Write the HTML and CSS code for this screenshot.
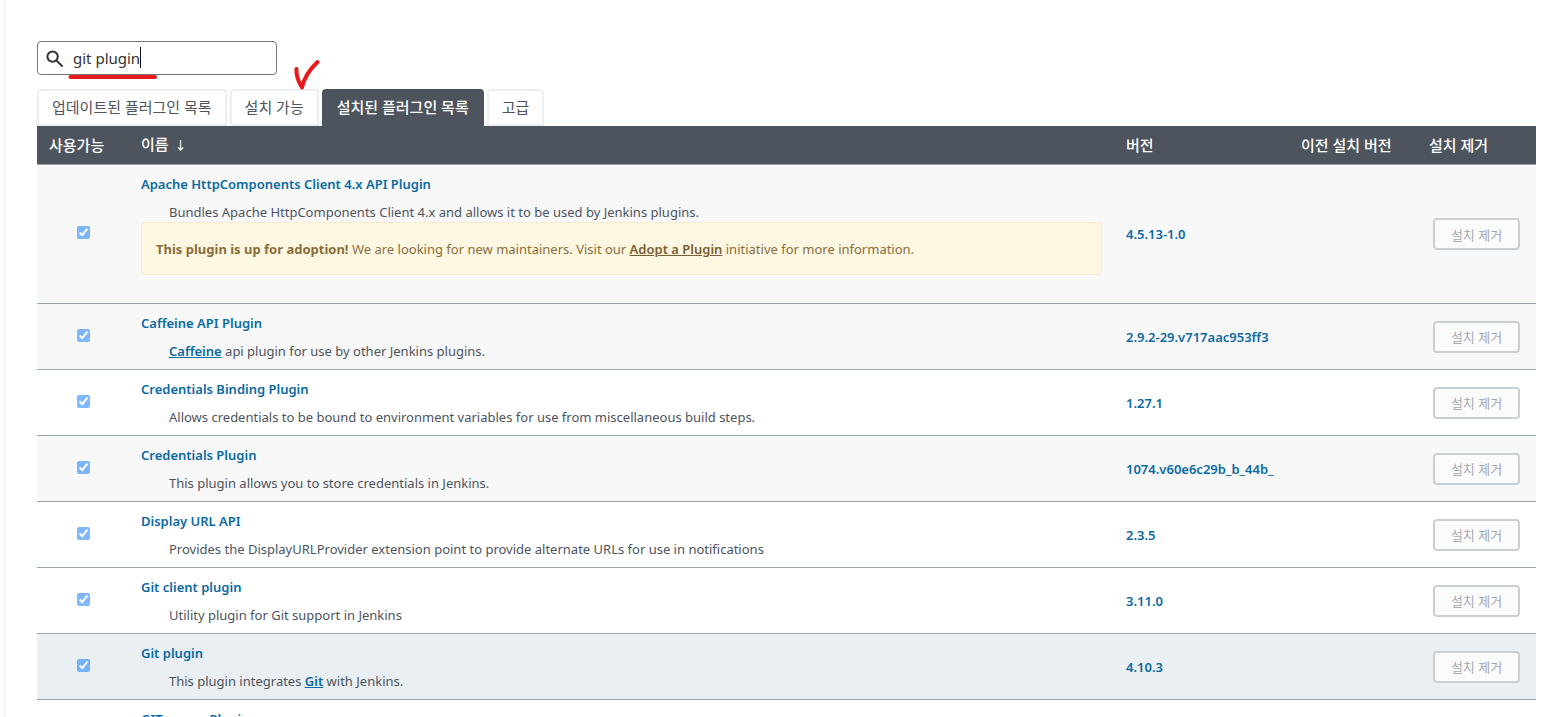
FILE: index.html
```html
<!DOCTYPE html>
<html lang="ko">
<head>
<meta charset="utf-8">
<title>플러그인 관리</title>
<link rel="stylesheet" href="styles.css">
</head>
<body>
<main class="panel">
  <div class="search">
    <svg class="search-icon" viewBox="0 0 18 18" aria-hidden="true"><circle cx="6.6" cy="6.6" r="5.2"/><path d="M10.6 10.6l6 6"/></svg>
    <input class="search-input" id="filter" type="text" value="git plugin" aria-label="플러그인 검색">
    <span class="caret"></span>
    <svg class="mark-line" viewBox="0 0 90 6" aria-hidden="true"><path d="M2.500 3H87"/></svg>
  </div>
  <nav class="tabs">
    <a class="tab" href="#updates">업데이트된 플러그인 목록</a>
    <a class="tab" href="#available">설치 가능<svg class="mark-check" viewBox="0 0 28 34" aria-hidden="true"><path d="M4.500 12C4 18 6 24 10 30.500C12 21 17 13 25.500 5"/></svg></a>
    <a class="tab tab-active" href="#installed">설치된 플러그인 목록</a>
    <a class="tab" href="#advanced">고급</a>
  </nav>
  <table class="plugins">
    <colgroup><col class="col-enabled"><col><col class="col-version"><col class="col-previous"><col class="col-uninstall"></colgroup>
    <thead>
      <tr><th>사용가능</th><th>이름 <span class="arrow">↓</span></th><th>버전</th><th>이전 설치 버전</th><th>설치 제거</th></tr>
    </thead>
    <tbody>
      <tr class="shaded">
        <td class="enabled"><input type="checkbox" checked aria-label="Apache HttpComponents Client 4.x API Plugin"></td>
        <td><a class="name" href="#p1">Apache HttpComponents Client 4.x API Plugin</a>
          <div class="excerpt">Bundles Apache HttpComponents Client 4.x and allows it to be used by Jenkins plugins.</div>
          <div class="alert"><strong>This plugin is up for adoption!</strong> We are looking for new maintainers. Visit our <a href="#adopt">Adopt a Plugin</a> initiative for more information.</div></td>
        <td><a class="version" href="#v1">4.5.13-1.0</a></td><td></td>
        <td class="uninstall"><button class="btn" disabled>설치 제거</button></td>
      </tr>
      <tr class="shaded">
        <td class="enabled"><input type="checkbox" checked aria-label="Caffeine API Plugin"></td>
        <td><a class="name" href="#p2">Caffeine API Plugin</a>
          <div class="excerpt"><a href="#caffeine">Caffeine</a> api plugin for use by other Jenkins plugins.</div></td>
        <td><a class="version" href="#v2">2.9.2-29.v717aac953ff3</a></td><td></td>
        <td class="uninstall"><button class="btn" disabled>설치 제거</button></td>
      </tr>
      <tr>
        <td class="enabled"><input type="checkbox" checked aria-label="Credentials Binding Plugin"></td>
        <td><a class="name" href="#p3">Credentials Binding Plugin</a>
          <div class="excerpt">Allows credentials to be bound to environment variables for use from miscellaneous build steps.</div></td>
        <td><a class="version" href="#v3">1.27.1</a></td><td></td>
        <td class="uninstall"><button class="btn" disabled>설치 제거</button></td>
      </tr>
      <tr class="shaded">
        <td class="enabled"><input type="checkbox" checked aria-label="Credentials Plugin"></td>
        <td><a class="name" href="#p4">Credentials Plugin</a>
          <div class="excerpt">This plugin allows you to store credentials in Jenkins.</div></td>
        <td><a class="version" href="#v4">1074.v60e6c29b_b_44b_</a></td><td></td>
        <td class="uninstall"><button class="btn" disabled>설치 제거</button></td>
      </tr>
      <tr>
        <td class="enabled"><input type="checkbox" checked aria-label="Display URL API"></td>
        <td><a class="name" href="#p5">Display URL API</a>
          <div class="excerpt">Provides the DisplayURLProvider extension point to provide alternate URLs for use in notifications</div></td>
        <td><a class="version" href="#v5">2.3.5</a></td><td></td>
        <td class="uninstall"><button class="btn" disabled>설치 제거</button></td>
      </tr>
      <tr>
        <td class="enabled"><input type="checkbox" checked aria-label="Git client plugin"></td>
        <td><a class="name" href="#p6">Git client plugin</a>
          <div class="excerpt">Utility plugin for Git support in Jenkins</div></td>
        <td><a class="version" href="#v6">3.11.0</a></td><td></td>
        <td class="uninstall"><button class="btn" disabled>설치 제거</button></td>
      </tr>
      <tr class="hovered">
        <td class="enabled"><input type="checkbox" checked aria-label="Git plugin"></td>
        <td><a class="name" href="#p7">Git plugin</a>
          <div class="excerpt">This plugin integrates <a href="#git">Git</a> with Jenkins.</div></td>
        <td><a class="version" href="#v7">4.10.3</a></td><td></td>
        <td class="uninstall"><button class="btn" disabled>설치 제거</button></td>
      </tr>
      <tr>
        <td></td><td><a class="name" href="#p8">GIT server Plugin</a></td><td></td><td></td><td></td>
      </tr>
    </tbody>
  </table>
</main>
</body>
</html>
```
FILE: styles.css
```css
* { box-sizing: border-box; }
body {
  margin: 0;
  height: 100vh;
  overflow: hidden;
  background: #fff;
  color: #4d545d;
  font-family: "Noto Sans", "Noto Sans CJK KR", sans-serif;
  font-size: 13px;
  line-height: 20px;
}
.panel {
  min-height: 100vh;
  margin-left: 4px;
  padding: 41px 32px 0;
  border-left: 1px solid #e9eff2;
}
.search { position: relative; width: 240px; height: 34px; margin-bottom: 14px; }
.search-input {
  width: 100%;
  height: 100%;
  padding: 0 8px 0 35px;
  border: 1px solid #73777c;
  border-radius: 4px;
  background: #fff;
  color: #333;
  font: 15px "Noto Sans", sans-serif;
}
.search-icon {
  position: absolute;
  left: 9px;
  top: 9px;
  width: 18px;
  height: 18px;
  fill: none;
  stroke: #333;
  stroke-width: 2;
}
.caret { position: absolute; left: 103px; top: 6px; width: 1px; height: 21px; background: #111; }
.mark-line, .mark-check { position: absolute; fill: none; stroke: #e8191c; stroke-width: 4; stroke-linecap: round; stroke-linejoin: round; }
.mark-line { left: 31px; top: 33px; width: 90px; height: 6px; }
.mark-check { right: -3px; top: -34px; width: 28px; height: 34px; }
.tabs { display: flex; gap: 3px; }
.tab {
  position: relative;
  height: 37px;
  padding: 6px 13px;
  border: 2px solid #e9eff2;
  border-radius: 4px 4px 0 0;
  color: #4d545d;
  font-size: 15px;
  font-weight: 400;
  text-decoration: none;
  white-space: nowrap;
}
.tab-active { background: #4d545d; border-color: #4d545d; color: #fff; font-weight: 500; }
.plugins { width: 100%; table-layout: fixed; border-collapse: separate; border-spacing: 0; }
.col-enabled { width: 92px; }
.col-version { width: 175px; }
.col-previous { width: 128px; }
.col-uninstall { width: 119px; }
th {
  height: 39px;
  padding: 0 12px;
  border-bottom: 1px solid #98a5af;
  background: #4d545d;
  color: #fff;
  font-size: 15px;
  font-weight: 500;
  text-align: left;
  white-space: nowrap;
}
.arrow { margin-left: 2px; font-size: 12px; font-weight: 500; }
td { padding: 8px 12px; border-bottom: 1px solid #98a5af; vertical-align: middle; }
.shaded { background: #f8f8f8; }
.hovered { background: #e9eff2; }
.enabled { text-align: center; }
.enabled input { display: block; width: 13px; height: 13px; margin: 0 auto 3px; opacity: .5; }
.name, .version { color: #0b6aa2; font-weight: 600; text-decoration: none; white-space: nowrap; }
.name { display: block; margin-top: 1px; }
.excerpt { margin: 8px 0 0 28px; }
.excerpt a { color: #0b6aa2; font-weight: 600; }
.alert {
  margin-bottom: 20px;
  padding: 16px 14px 15px;
  border: 1px solid #faebcc;
  border-radius: 4px;
  background: #fef7e2;
  color: #8a6d3b;
}
.alert a { color: #7a5d30; font-weight: 600; }
.uninstall { padding: 0 16px; }
.btn {
  display: block;
  width: 100%;
  height: 32px;
  padding: 0;
  border: 2px solid #cacfd4;
  border-radius: 4px;
  background: #fbfbfb;
  color: #a6a9ae;
  font: 400 13px "Noto Sans", "Noto Sans CJK KR", sans-serif;
}
```
